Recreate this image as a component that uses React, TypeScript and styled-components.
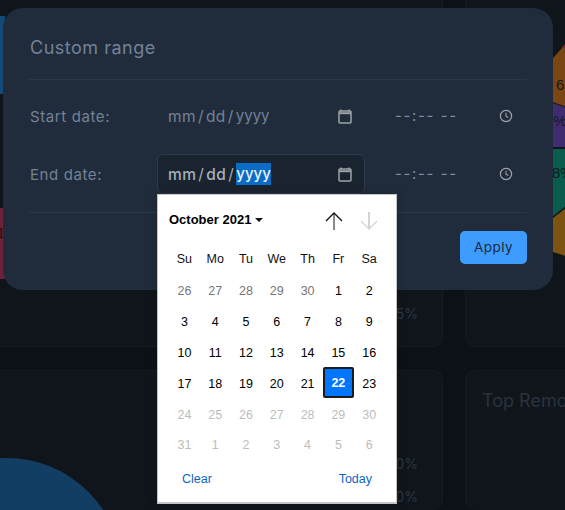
import React from "react";
import styled, { createGlobalStyle } from "styled-components";

const GlobalStyle = createGlobalStyle`
  html, body {
    margin: 0;
    padding: 0;
    background: #0c1017;
  }
`;

type DayKind = "muted" | "normal" | "faded" | "selected";

const weekDays = ["Su", "Mo", "Tu", "We", "Th", "Fr", "Sa"];

const days: { label: number; kind: DayKind }[] = [
  ...[26, 27, 28, 29, 30].map((label) => ({ label, kind: "muted" as DayKind })),
  ...Array.from({ length: 21 }, (_, i) => ({ label: i + 1, kind: "normal" as DayKind })),
  { label: 22, kind: "selected" },
  { label: 23, kind: "normal" },
  ...[24, 25, 26, 27, 28, 29, 30, 31, 1, 2, 3, 4, 5, 6].map((label) => ({ label, kind: "faded" as DayKind })),
];

const dayColors: Record<DayKind, string> = {
  muted: "#767676",
  normal: "#000000",
  faded: "#bdbdbd",
  selected: "#ffffff",
};

function CalendarIcon() {
  return (
    <svg width="14" height="15" viewBox="0 0 14 15" fill="none">
      <path d="M3 0.5v2M11 0.5v2" stroke="#9fa3a8" strokeWidth="1.6" />
      <rect x="1" y="2" width="12" height="12" rx="1" stroke="#9fa3a8" strokeWidth="1.5" />
      <path d="M1 4.2h12" stroke="#9fa3a8" strokeWidth="2" />
    </svg>
  );
}

function ClockIcon() {
  return (
    <svg width="14" height="14" viewBox="0 0 14 14" fill="none">
      <circle cx="7" cy="7" r="5.6" stroke="#9fa3a8" strokeWidth="1.2" />
      <path d="M7 3.8V7.2L9.4 8.6" stroke="#9fa3a8" strokeWidth="1.1" />
    </svg>
  );
}

function ArrowIcon({ dir, color, stem }: { dir: "up" | "down"; color: string; stem: string }) {
  return (
    <svg width="18" height="20" viewBox="0 0 18 20" fill="none">
      {dir === "up" ? (
        <>
          <path d="M9 2V19" stroke={stem} strokeWidth="2" />
          <path d="M1 10L9 2L17 10" stroke={color} strokeWidth="1.3" />
        </>
      ) : (
        <>
          <path d="M9 1V18" stroke={stem} strokeWidth="2" />
          <path d="M1 10L9 18L17 10" stroke={color} strokeWidth="1.3" />
        </>
      )}
    </svg>
  );
}

function DateText({ active }: { active?: boolean }) {
  return (
    <DateValue $active={active}>
      <span>mm</span>
      <Slash>/</Slash>
      <span>dd</span>
      <Slash>/</Slash>
      <YearSegment $active={active}>yyyy</YearSegment>
    </DateValue>
  );
}

function DatePopup() {
  return (
    <Popup>
      <PopupHeader>
        <MonthLabel>
          October 2021
          <MonthCaret />
        </MonthLabel>
        <ArrowGroup>
          <ArrowIcon dir="up" color="#111111" stem="#8a8a8a" />
          <ArrowIcon dir="down" color="#d4d4d4" stem="#d4d4d4" />
        </ArrowGroup>
      </PopupHeader>
      <DayGrid>
        {weekDays.map((d) => (
          <WeekDay key={d} $color="#111111">{d}</WeekDay>
        ))}
        {days.map((d, i) =>
          d.kind === "selected" ? (
            <SelectedDay key={i}>{d.label}</SelectedDay>
          ) : (
            <DayCell key={i} $color={dayColors[d.kind]}>{d.label}</DayCell>
          )
        )}
      </DayGrid>
      <PopupFooter>
        <LinkText>Clear</LinkText>
        <LinkText>Today</LinkText>
      </PopupFooter>
    </Popup>
  );
}

export default function App() {
  return (
    <>
      <GlobalStyle />
      <Page>
        <Dashboard>
          <TopCard>
            <SideChart width="30" height="300" viewBox="0 0 30 300">
              <polygon points="0,16 14,16 14,94 0,94" fill="#134a78" />
              <polygon points="0,208 14,208 14,279 0,279" fill="#6c2238" />
              <text x="6" y="238" fontSize="14" fill="#141414" fontFamily="Liberation Sans, sans-serif">1</text>
            </SideChart>
            <LegendValue>5%</LegendValue>
          </TopCard>
          <RightCard>
            <SideChart width="100" height="300" viewBox="466 0 100 300">
              <polygon points="565,44 562,47 565,49" fill="#7c2036" />
              <polygon points="553,58 563,47 566,49 566,107 553,102" fill="#7a4613" />
              <polygon points="553,103 566,108 566,147 553,147" fill="#3f2d70" />
              <polygon points="553,149 566,149 566,206 553,216" fill="#0a5c4c" />
              <polygon points="553,218 566,208 566,256 553,252" fill="#7a5410" />
              <text x="556" y="90" fontSize="15" fill="#15181d" fontFamily="Liberation Sans, sans-serif">6.</text>
              <text x="545" y="126" fontSize="15" fill="#15181d" fontFamily="Liberation Sans, sans-serif">0%</text>
              <text x="552" y="178" fontSize="15" fill="#15181d" fontFamily="Liberation Sans, sans-serif">8%</text>
            </SideChart>
          </RightCard>
          <BottomCard>
            <PieChart width="120" height="140" viewBox="0 0 120 140">
              <circle cx="16" cy="202" r="115" fill="#133e64" />
            </PieChart>
            <LegendList>
              <LegendValue>0%</LegendValue>
              <LegendValue>0%</LegendValue>
            </LegendList>
          </BottomCard>
          <TitleCard>
            <CardTitle>Top Remote</CardTitle>
          </TitleCard>
        </Dashboard>

        <Modal>
          <ModalHeader>Custom range</ModalHeader>
          <DateRow>
            <FieldLabel>Start date:</FieldLabel>
            <DateField>
              <DateText />
              <CalendarIcon />
            </DateField>
            <TimeField>
              <TimeText>--:-- --</TimeText>
              <ClockIcon />
            </TimeField>
          </DateRow>
          <DateRow>
            <FieldLabel>End date:</FieldLabel>
            <DateField $focused>
              <DateText active />
              <CalendarIcon />
              <DatePopup />
            </DateField>
            <TimeField>
              <TimeText>--:-- --</TimeText>
              <ClockIcon />
            </TimeField>
          </DateRow>
          <ModalFooter>
            <ApplyButton>Apply</ApplyButton>
          </ModalFooter>
        </Modal>
      </Page>
    </>
  );
}

const Page = styled.div`
  position: relative;
  width: 565px;
  height: 510px;
  overflow: hidden;
  background: #0c1017;
  font-family: "Inter", "Open Sans", sans-serif;
`;

const Dashboard = styled.div`
  display: grid;
  grid-template-columns: 453px 110px;
  grid-template-rows: 347px 140px;
  column-gap: 22px;
  row-gap: 23px;
  margin-left: -10px;
`;

const Card = styled.div`
  background: #10151c;
  border: 1px solid #161b23;
  border-radius: 10px;
  box-sizing: border-box;
`;

const TopCard = styled(Card)`
  display: flex;
  justify-content: space-between;
  align-items: flex-end;
  padding: 0 24px 23px 0;
  border-top: none;
  border-top-left-radius: 0;
  border-top-right-radius: 0;
`;

const RightCard = styled(Card)`
  border-top: none;
  border-right: none;
  border-top-left-radius: 0;
`;

const BottomCard = styled(Card)`
  display: flex;
  justify-content: space-between;
  padding-right: 24px;
  border-bottom: none;
  overflow: hidden;
`;

const TitleCard = styled(Card)`
  padding: 18px 0 0 16px;
  border-bottom: none;
  border-right: none;
  white-space: nowrap;
  overflow: hidden;
`;

const SideChart = styled.svg`
  display: block;
  align-self: flex-start;
`;

const PieChart = styled.svg`
  display: block;
  flex: none;
`;

const LegendList = styled.div`
  display: flex;
  flex-direction: column;
  gap: 14px;
  padding-top: 83px;
`;

const LegendValue = styled.div`
  font-size: 14px;
  line-height: 19px;
  color: #2e343e;
`;

const CardTitle = styled.div`
  font-size: 18px;
  line-height: 24px;
  color: #2b313b;
`;

const Modal = styled.div`
  position: absolute;
  left: 3px;
  top: 8px;
  width: 550px;
  height: 282px;
  box-sizing: border-box;
  padding: 0 26px;
  background: #202c3b;
  border-radius: 20px;
`;

const ModalHeader = styled.div`
  height: 72px;
  box-sizing: border-box;
  padding: 8px 0 0 1px;
  display: flex;
  align-items: center;
  font-size: 18px;
  letter-spacing: 0.5px;
  color: #738297;
  border-bottom: 1px solid #2a3747;
  margin-bottom: 16px;
`;

const DateRow = styled.div`
  display: grid;
  grid-template-columns: 128px 208px 118px;
  height: 40px;
  margin-bottom: 18px;
  align-items: center;

  & > :nth-child(3) {
    margin-left: 30px;
  }
`;

const FieldLabel = styled.div`
  padding-left: 1px;
  font-size: 15px;
  letter-spacing: 0.6px;
  color: #738297;
`;

const DateField = styled.div<{ $focused?: boolean }>`
  position: relative;
  height: 40px;
  box-sizing: border-box;
  padding: 0 12px 0 10px;
  display: flex;
  align-items: center;
  justify-content: space-between;
  border: 1px solid ${(p) => (p.$focused ? "#2d3a4c" : "transparent")};
  border-radius: 6px;
  background: ${(p) => (p.$focused ? "#1a2330" : "transparent")};
`;

const DateValue = styled.div<{ $active?: boolean }>`
  display: flex;
  align-items: center;
  font-size: 15.5px;
  letter-spacing: 0.4px;
  color: ${(p) => (p.$active ? "#a5b0bd" : "#738297")};
  font-weight: ${(p) => (p.$active ? 500 : 400)};
`;

const Slash = styled.span`
  margin: 0 2px;
  font-weight: 400;
`;

const YearSegment = styled.span<{ $active?: boolean }>`
  padding: 1px 0 2px;
  letter-spacing: 0;
  font-size: 15px;
  background: ${(p) => (p.$active ? "#0a6cc4" : "transparent")};
  color: ${(p) => (p.$active ? "#e8f2fb" : "inherit")};
`;

const TimeField = styled.div`
  display: flex;
  align-items: center;
  justify-content: space-between;
  width: 118px;
`;

const TimeText = styled.div`
  margin-top: -1px;
  font-size: 15px;
  letter-spacing: 1.6px;
  color: #7d8da3;
`;

const ModalFooter = styled.div`
  display: flex;
  justify-content: flex-end;
  padding-top: 18px;
  border-top: 1px solid #2a3747;
`;

const ApplyButton = styled.button`
  width: 67px;
  height: 33px;
  padding: 0 0 1px;
  border: none;
  border-radius: 5px;
  background: #3f9cff;
  color: #1d2a3b;
  font-family: inherit;
  font-size: 13.5px;
  letter-spacing: 0.4px;
`;

const Popup = styled.div`
  position: absolute;
  left: -1px;
  top: calc(100% + 1px);
  z-index: 2;
  width: 240px;
  height: 310px;
  box-sizing: border-box;
  padding: 0 12px 0 11px;
  background: #ffffff;
  border: 1px solid #c4c4c4;
  border-bottom-width: 2px;
  box-shadow: 0 0 10px rgba(0, 0, 0, 0.12);
  font-family: "Liberation Sans", Arial, sans-serif;
`;

const PopupHeader = styled.div`
  height: 49px;
  display: flex;
  align-items: center;
  justify-content: space-between;
`;

const MonthLabel = styled.div`
  display: flex;
  align-items: center;
  gap: 4px;
  font-size: 13px;
  font-weight: 700;
  color: #000000;
`;

const MonthCaret = styled.span`
  width: 0;
  height: 0;
  border-left: 4px solid transparent;
  border-right: 4px solid transparent;
  border-top: 4px solid #111111;
`;

const ArrowGroup = styled.div`
  display: flex;
  gap: 17px;
  margin-right: 6px;
  margin-top: 2px;
`;

const DayGrid = styled.div`
  display: grid;
  grid-template-columns: repeat(7, 30.8px);
  grid-template-rows: 32px;
  grid-auto-rows: 30.8px;
`;

const DayCell = styled.div<{ $color: string }>`
  display: flex;
  align-items: center;
  justify-content: center;
  font-size: 12.5px;
  color: ${(p) => p.$color};
`;

const WeekDay = styled(DayCell)`
  padding-bottom: 2px;
`;

const SelectedDay = styled(DayCell).attrs({ $color: "#ffffff" })`
  box-sizing: border-box;
  margin: -1px 0 1px;
  background: #0075ff;
  border: 2px solid #1b1b1b;
  border-radius: 2px;
  font-weight: 700;
`;

const PopupFooter = styled.div`
  height: 36px;
  display: flex;
  align-items: center;
  justify-content: space-between;
  padding: 0 12px 0 13px;
`;

const LinkText = styled.span`
  font-size: 12.5px;
  color: #0b66c3;
`;
